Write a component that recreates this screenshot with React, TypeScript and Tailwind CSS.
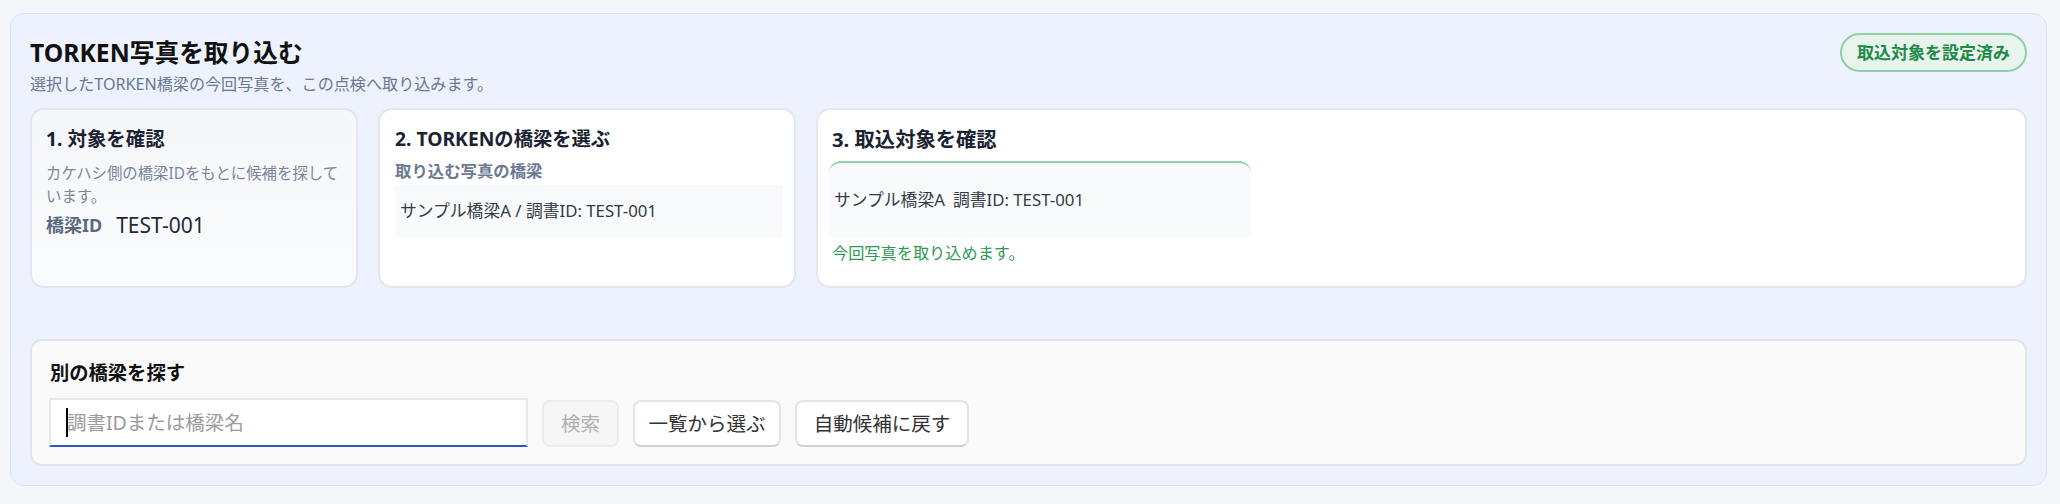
export default function App() {
  return (
    <div className="min-h-[504px] bg-[#f5f6fa] pt-[13px] pb-[19px] pl-[10px] pr-[13px] font-['Noto_Sans','Noto_Sans_CJK_JP',sans-serif]">
      <section className="rounded-[14px] border border-[#d8e3fb] bg-[#edf2fe] p-[19px]">
        {/* Header */}
        <header className="flex items-start justify-between">
          <div>
            <h1 className="text-[24.7px] font-bold leading-[39px] text-[#111111]">TORKEN写真を取り込む</h1>
            <p className="text-[16.1px] leading-[24px] text-[#6b7890]">
              選択したTORKEN橋梁の今回写真を、この点検へ取り込みます。
            </p>
          </div>
          <span className="flex h-[39px] items-center rounded-full border-2 border-[#8fd0a5] bg-[#e8f5ec] px-[15px] text-[17px] font-bold text-[#1e8a48]">
            取込対象を設定済み
          </span>
        </header>

        {/* Steps */}
        <div className="mt-3 grid h-[180px] grid-cols-[328px_418px_1fr] gap-5">
          <div className="rounded-[14px] border-2 border-[#e2e6ee] bg-gradient-to-b from-[#f6f7f9] to-[#fafbfc] px-[14px] pt-[15px]">
            <h2 className="text-[19.4px] font-bold leading-[28px] text-[#1a2233]">1. 対象を確認</h2>
            <p className="mt-[9px] text-[15.4px] leading-[23px] text-[#7a879b]">
              カケハシ側の橋梁IDをもとに候補を探しています。
            </p>
            <div className="mt-[4px] flex items-center gap-[14px] leading-[26px]">
              <span className="text-[18px] font-bold text-[#5b6980]">橋梁ID</span>
              <span className="text-[21px] text-[#1f2937]">TEST-001</span>
            </div>
          </div>

          <div className="rounded-[14px] border-2 border-[#e2e6ee] bg-white px-[15px] pt-[15px]">
            <h2 className="text-[19.3px] font-bold leading-[28px] text-[#1a2233]">2. TORKENの橋梁を選ぶ</h2>
            <p className="mt-[6px] text-[16.4px] font-bold leading-[24px] text-[#6b7a93]">取り込む写真の橋梁</p>
            <div className="mt-[2px] flex h-[52px] w-[388px] items-center bg-[#f8fafc] px-[5px] text-[16.8px] text-[#333a45]">
              サンプル橋梁A / 調書ID: TEST-001
            </div>
          </div>

          <div className="rounded-[14px] border-2 border-[#e2e6ee] bg-white px-[14px] pt-[15px]">
            <h2 className="text-[20.3px] font-bold leading-[28px] text-[#1a2233]">3. 取込対象を確認</h2>
            <div className="-ml-[3px] mt-[8px] flex h-[76px] w-[422px] items-center gap-[8px] rounded-t-[12px] border-t-2 border-[#8dd3a5] bg-[#f8fafc] px-[5px] text-[16.8px] text-[#333a45]">
              <span>サンプル橋梁A</span>
              <span>調書ID: TEST-001</span>
            </div>
            <p className="mt-[5px] text-[16.2px] leading-[23px] text-[#2e9a55]">今回写真を取り込めます。</p>
          </div>
        </div>

        {/* Search another bridge */}
        <div className="mt-[51px] rounded-[12px] border-2 border-[#e3e5ea] bg-[#fafafa] px-[18px] pt-[18px] pb-[17px]">
          <h3 className="text-[19.3px] font-bold leading-[27px] text-[#111111]">別の橋梁を探す</h3>
          <div className="mt-3 flex items-end gap-[14px]">
            <div className="relative -ml-[1px]">
              <input
                type="text"
                placeholder="調書IDまたは橋梁名"
                className="h-[49px] w-[479px] border-2 border-[#e8e8e8] border-b-[#2d5bb9] bg-white px-[16px] text-[19.5px] text-[#222] caret-transparent outline-none placeholder:text-[#9b9b9b]"
              />
              <span className="absolute left-[17px] top-[10px] h-[29px] w-[2px] bg-black" />
            </div>
            <button
              disabled
              className="flex h-[47px] w-[77px] items-center justify-center rounded-[8px] border-2 border-[#ececec] bg-[#f6f6f6] text-[19.5px] text-[#b0b0b0]"
            >
              検索
            </button>
            <button className="flex h-[47px] w-[148px] items-center justify-center rounded-[8px] border-2 border-[#e4e4e4] border-b-[#d0d0d0] bg-white text-[19.5px] text-[#333333]">
              一覧から選ぶ
            </button>
            <button className="flex h-[47px] w-[174px] items-center justify-center rounded-[8px] border-2 border-[#e4e4e4] border-b-[#d0d0d0] bg-white text-[19.5px] text-[#333333]">
              自動候補に戻す
            </button>
          </div>
        </div>
      </section>
    </div>
  );
}
